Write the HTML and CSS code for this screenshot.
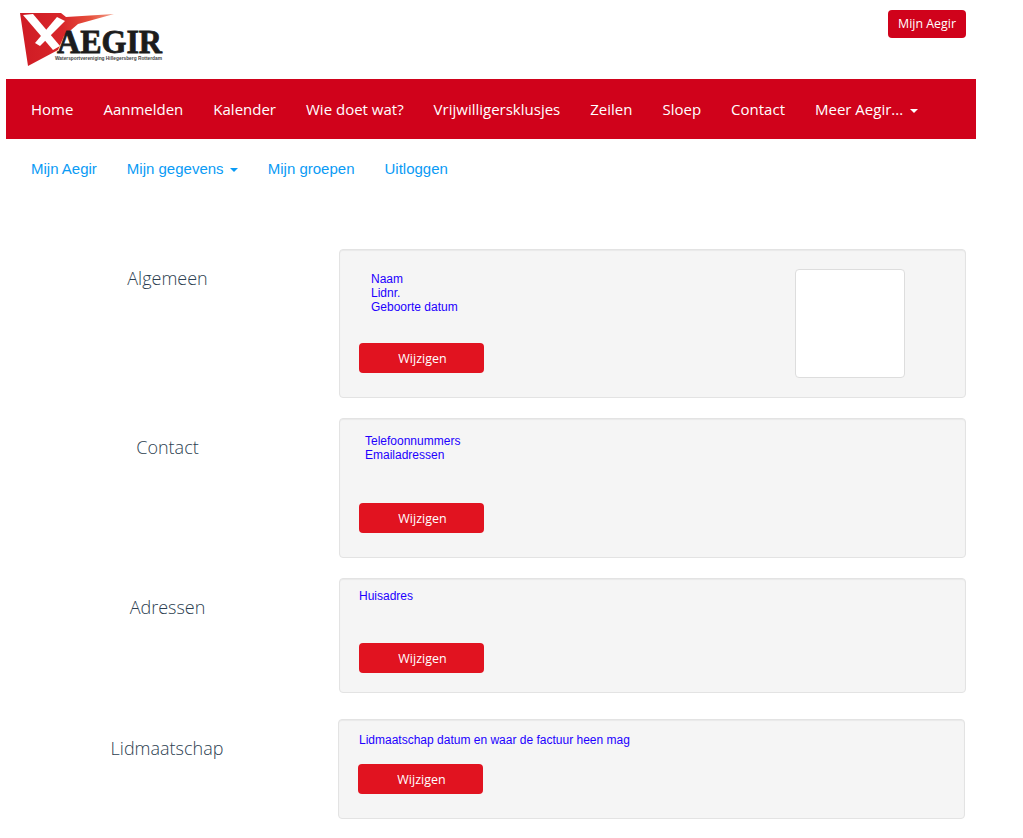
FILE: index.html
```html
<!DOCTYPE html>
<html lang="en">
<head>
    <meta charset="UTF-8">
    <meta name="viewport" content="width=device-width, initial-scale=1.0">
    <title>Mijn Aegir</title>
    <link rel="stylesheet" href="styles.css">
</head>
<body>
    <div class="page">
        <header class="top">
            <svg class="logo" width="170" height="79" viewBox="0 0 170 79">
                <defs>
                    <linearGradient id="flag" x1="0" y1="0" x2="1" y2="0">
                        <stop offset="0" stop-color="#cf1b24"/>
                        <stop offset="0.45" stop-color="#d8262a"/>
                        <stop offset="0.75" stop-color="#e6503c"/>
                        <stop offset="1" stop-color="#f3a08c"/>
                    </linearGradient>
                </defs>
                <polygon points="14,13 55,13 60,17 108,14 72,24 58,36 52,50 22,66" fill="url(#flag)"/>
                <polygon points="17,15 27,14 54,46 47,50" fill="#fff"/>
                <polygon points="51,17 59,21 34,46 29,43" fill="#fff"/>
                <text class="logo-name" x="51" y="53" textLength="105" lengthAdjust="spacingAndGlyphs">AEGIR</text>
                <text class="logo-sub" x="49" y="60" textLength="107" lengthAdjust="spacingAndGlyphs">Watersportvereniging Hillegersberg Rotterdam</text>
            </svg>
            <a class="account-btn" href="#">Mijn Aegir</a>
        </header>

        <nav class="mainnav">
            <a href="#">Home</a>
            <a href="#">Aanmelden</a>
            <a href="#">Kalender</a>
            <a href="#">Wie doet wat?</a>
            <a href="#">Vrijwilligersklusjes</a>
            <a href="#">Zeilen</a>
            <a href="#">Sloep</a>
            <a href="#">Contact</a>
            <a href="#">Meer Aegir... <span class="caret"></span></a>
        </nav>

        <nav class="subnav">
            <a href="#">Mijn Aegir</a>
            <a href="#">Mijn gegevens <span class="caret"></span></a>
            <a href="#">Mijn groepen</a>
            <a href="#">Uitloggen</a>
        </nav>

        <section class="row row-general">
            <h2>Algemeen</h2>
            <div class="card card-split">
                <div>
                    <div class="info info-general">Naam<br>Lidnr.<br>Geboorte datum</div>
                    <a class="edit-btn" href="#">Wijzigen</a>
                </div>
                <div class="photo"></div>
            </div>
        </section>

        <section class="row row-contact">
            <h2>Contact</h2>
            <div class="card">
                <div class="info info-contact">Telefoonnummers<br>Emailadressen</div>
                <a class="edit-btn" href="#">Wijzigen</a>
            </div>
        </section>

        <section class="row row-address">
            <h2>Adressen</h2>
            <div class="card">
                <div class="info info-address">Huisadres</div>
                <a class="edit-btn" href="#">Wijzigen</a>
            </div>
        </section>

        <section class="row row-member">
            <h2>Lidmaatschap</h2>
            <div class="card">
                <div class="info info-member">Lidmaatschap datum en waar de factuur heen mag</div>
                <a class="edit-btn" href="#">Wijzigen</a>
            </div>
        </section>
    </div>
</body>
</html>
```

FILE: styles.css
```css
body {
    margin: 0;
    background: #fff;
    font-family: 'Open Sans', sans-serif;
    color: #2c3e50;
}
a {
    text-decoration: none;
}
.page {
    width: 970px;
    margin-left: 6px;
    padding-bottom: 19px;
}

/* header */
.top {
    height: 79px;
    display: flex;
    justify-content: space-between;
    align-items: flex-start;
}
.logo {
    display: block;
}
.logo-name {
    font-family: 'Liberation Serif', serif;
    font-weight: bold;
    font-size: 33px;
    fill: #1c1c1c;
    stroke: #1c1c1c;
    stroke-width: 0.8px;
}
.logo-sub {
    font-family: 'Liberation Sans', sans-serif;
    font-weight: bold;
    font-size: 5px;
    fill: #444;
}
.account-btn {
    margin: 10px 10px 0 0;
    padding: 0 10px;
    height: 28px;
    line-height: 28px;
    background: #d0021b;
    color: #fff;
    font-size: 12.4px;
    border-radius: 4px;
}

/* menus */
.mainnav, .subnav {
    height: 60px;
    display: flex;
    align-items: center;
    padding-left: 25px;
    gap: 30px;
    font-size: 15px;
}
.mainnav {
    background: #d0021b;
}
.mainnav a {
    color: #fff;
}
.subnav {
    margin-bottom: 50px;
    padding-bottom: 2px;
    height: 58px;
    font-family: 'Liberation Sans', sans-serif;
}
.subnav a {
    color: #0a9bf5;
}
.subnav .caret {
    margin-left: 2px;
}
.caret {
    display: inline-block;
    margin-left: 3px;
    vertical-align: middle;
    border-top: 4px solid;
    border-left: 4px solid transparent;
    border-right: 4px solid transparent;
}

/* rows */
.row {
    display: grid;
    grid-template-columns: 323px 627px;
    column-gap: 10px;
    margin-bottom: 20px;
}
.row h2 {
    margin: 0;
    padding-top: 16px;
    text-align: center;
    font-size: 18px;
    line-height: 26px;
    font-weight: 300;
    color: #2c3e50;
}
.card {
    box-sizing: border-box;
    padding: 19px 19px 24px;
    background: #f5f5f5;
    border: 1px solid #e3e3e3;
    border-radius: 4px;
    box-shadow: inset 0 1px 1px rgba(0, 0, 0, 0.05);
}
.card-split {
    display: flex;
    justify-content: space-between;
    padding-right: 60px;
    padding-bottom: 19px;
}
.info {
    font-family: 'Liberation Sans', sans-serif;
    font-size: 12px;
    line-height: 14px;
    color: #2200ff;
}
.info-general {
    margin: 3px 0 29px;
    padding-left: 12px;
}
.info-contact {
    margin: -4px 0 41px;
    padding-left: 6px;
}
.info-address {
    margin: -9px 0 40px;
}
.info-member {
    margin: -6px 0 17px;
    padding-left: 1px;
}
.row-address .card {
    padding-bottom: 19px;
}
.row-member {
    margin-top: 26px;
    margin-bottom: 0;
    grid-template-columns: 322px 627px;
}
.edit-btn {
    display: block;
    box-sizing: border-box;
    width: 125px;
    height: 30px;
    padding-left: 2px;
    line-height: 31px;
    text-align: center;
    background: #e11320;
    color: #fff;
    font-size: 12.5px;
    border-radius: 4px;
}
.photo {
    box-sizing: border-box;
    width: 110px;
    height: 109px;
    background: #fff;
    border: 1px solid #ddd;
    border-radius: 4px;
}
```
